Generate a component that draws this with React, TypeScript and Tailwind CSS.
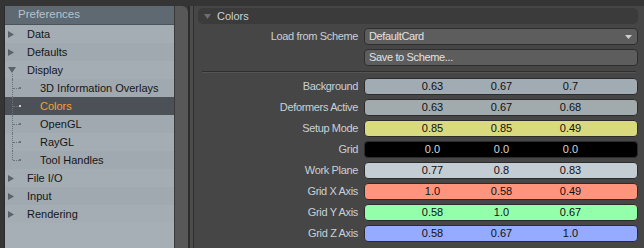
import React from "react";

type ColorRow = { label: string; bg: string; text: string; values: string[] };

const colorRows: ColorRow[] = [
  { label: "Background", bg: "bg-[#a1abb3]", text: "text-[#111]", values: ["0.63", "0.67", "0.7"] },
  { label: "Deformers Active", bg: "bg-[#a1abad]", text: "text-[#111]", values: ["0.63", "0.67", "0.68"] },
  { label: "Setup Mode", bg: "bg-[#d9d97d]", text: "text-[#111]", values: ["0.85", "0.85", "0.49"] },
  { label: "Grid", bg: "bg-[#000]", text: "text-[#d6d6d6]", values: ["0.0", "0.0", "0.0"] },
  { label: "Work Plane", bg: "bg-[#c4ccd4]", text: "text-[#111]", values: ["0.77", "0.8", "0.83"] },
  { label: "Grid X Axis", bg: "bg-[#ff947d]", text: "text-[#111]", values: ["1.0", "0.58", "0.49"] },
  { label: "Grid Y Axis", bg: "bg-[#94ffab]", text: "text-[#111]", values: ["0.58", "1.0", "0.67"] },
  { label: "Grid Z Axis", bg: "bg-[#94abff]", text: "text-[#111]", values: ["0.58", "0.67", "1.0"] },
];

type TreeItem = { label: string; kind: "closed" | "open" | "child"; selected?: boolean; last?: boolean };

const tree: TreeItem[] = [
  { label: "Data", kind: "closed" },
  { label: "Defaults", kind: "closed" },
  { label: "Display", kind: "open" },
  { label: "3D Information Overlays", kind: "child" },
  { label: "Colors", kind: "child", selected: true },
  { label: "OpenGL", kind: "child" },
  { label: "RayGL", kind: "child" },
  { label: "Tool Handles", kind: "child", last: true },
  { label: "File I/O", kind: "closed" },
  { label: "Input", kind: "closed" },
  { label: "Rendering", kind: "closed" },
];

function TreeRow({ item, index }: { item: TreeItem; index: number }) {
  const shade = item.selected
    ? "bg-[#4b5157]"
    : index % 2 === 0
    ? "bg-[#a4adb3]"
    : "bg-[#a0a9af]";
  return (
    <div className={`relative h-[18px] flex items-center ${shade}`}>
      {item.kind === "closed" && (
        <svg className="absolute left-[3px] top-[6px]" width="6" height="7" viewBox="0 0 6 7">
          <path d="M0 0 L6 3.5 L0 7 Z" fill="#5b6268" />
        </svg>
      )}
      {item.kind === "open" && (
        <>
          <svg className="absolute left-[3px] top-[6px]" width="8" height="6" viewBox="0 0 8 6">
            <path d="M0 0 L8 0 L4 6 Z" fill="#5b6268" />
          </svg>
          <div className="absolute left-[7px] top-[13px] bottom-0 border-l border-dotted border-[#6b7278]" />
        </>
      )}
      {item.kind === "child" && (
        <>
          <div
            className={`absolute left-[7px] top-0 border-l border-dotted border-[#6b7278] ${
              item.last ? "h-[9px]" : "h-[18px]"
            }`}
          />
          <div className="absolute left-[8px] top-[9px] w-[6px] border-t border-dotted border-[#6b7278]" />
          <div className={`absolute left-[14px] top-[8px] w-[2px] h-[2px] ${item.selected ? "bg-[#c9d0d4]" : "bg-[#6b7278]"}`} />
        </>
      )}
      <span
        className={`${item.kind === "child" ? "pl-[35px]" : "pl-[22px]"} ${
          item.selected ? "text-[#f4a12e]" : "text-[#161616]"
        }`}
      >
        {item.label}
      </span>
    </div>
  );
}

export default function App() {
  return (
    <div className="w-[644px] h-[248px] overflow-hidden bg-[#353535] flex pt-[6px] font-['Liberation_Sans',Arial,sans-serif] text-[11px] leading-none">
      {/* left: preferences tree */}
      <div className="ml-[4px] w-[170px] flex flex-col border-l border-[#2b2b2b] bg-[#a3acb2]">
        <div className="h-[19px] flex items-center pl-[13px] bg-[#5e6972] border-b border-[#4a535a] text-[#b7c3cb] text-[11.5px]">
          Preferences
        </div>
        {tree.map((item, i) => (
          <TreeRow key={item.label} item={item} index={i} />
        ))}
        <div className="flex-1 bg-[#a6afb5]" />
      </div>

      {/* scroll strip + divider */}
      <div className="w-[14px] bg-[#585858] rounded-tr-[6px] border-l border-[#3a3a3a]" />
      <div className="w-[2px] bg-[#2c2c2c]" />
      <div className="w-[3px] bg-[#4d4d4d]" />
      <div className="w-[1px] bg-[#2e2e2e]" />

      {/* right: colors settings */}
      <div className="flex-1 bg-[#464646] pl-[4px] pr-[6px] pt-[2px] tracking-[-0.35px]">
        <div className="h-[16px] flex items-center rounded-[5px] bg-[#3b3b3b]">
          <svg className="ml-[6px] mr-[6px]" width="7" height="5" viewBox="0 0 7 5">
            <path d="M0 0 L7 0 L3.5 5 Z" fill="#6e6e6e" />
          </svg>
          <span className="text-[#c8d3da] tracking-normal">Colors</span>
        </div>

        <div className="mt-[4px] grid grid-cols-[160px_1fr] gap-x-[6px] gap-y-[4px] items-center">
          <div className="text-right text-[#c9d1d6]">Load from Scheme</div>
          <div className="h-[17px] rounded-[4px] bg-[#5d5d5d] border border-[#2e2e2e] flex items-center justify-between pl-[4px] pr-[5px] text-[#e2e2e2]">
            <span>DefaultCard</span>
            <svg width="7" height="4" viewBox="0 0 7 4">
              <path d="M0 0 L7 0 L3.5 4 Z" fill="#cfcfcf" />
            </svg>
          </div>
          <div />
          <div className="h-[17px] rounded-[4px] bg-[#5d5d5d] border border-[#2e2e2e] flex items-center pl-[4px] text-[#e2e2e2]">
            Save to Scheme...
          </div>
        </div>

        <div className="mt-[5px] ml-[4px] mr-[2px] border-t border-[#2f2f2f] border-b border-b-[#555555]" />

        <div className="mt-[5px] grid grid-cols-[160px_1fr] gap-x-[6px] gap-y-[4px] items-center">
          {colorRows.map((r) => (
            <React.Fragment key={r.label}>
              <div className="text-right text-[#c9d1d6]">{r.label}</div>
              <div
                className={`h-[17px] rounded-[4px] border border-[#2c2c2c] ${r.bg} ${r.text} grid grid-cols-[69px_69px_69px] pl-[33px] items-center tracking-normal`}
              >
                {r.values.map((v, i) => (
                  <span key={i} className="text-center">
                    {v}
                  </span>
                ))}
              </div>
            </React.Fragment>
          ))}
        </div>
      </div>
    </div>
  );
}
